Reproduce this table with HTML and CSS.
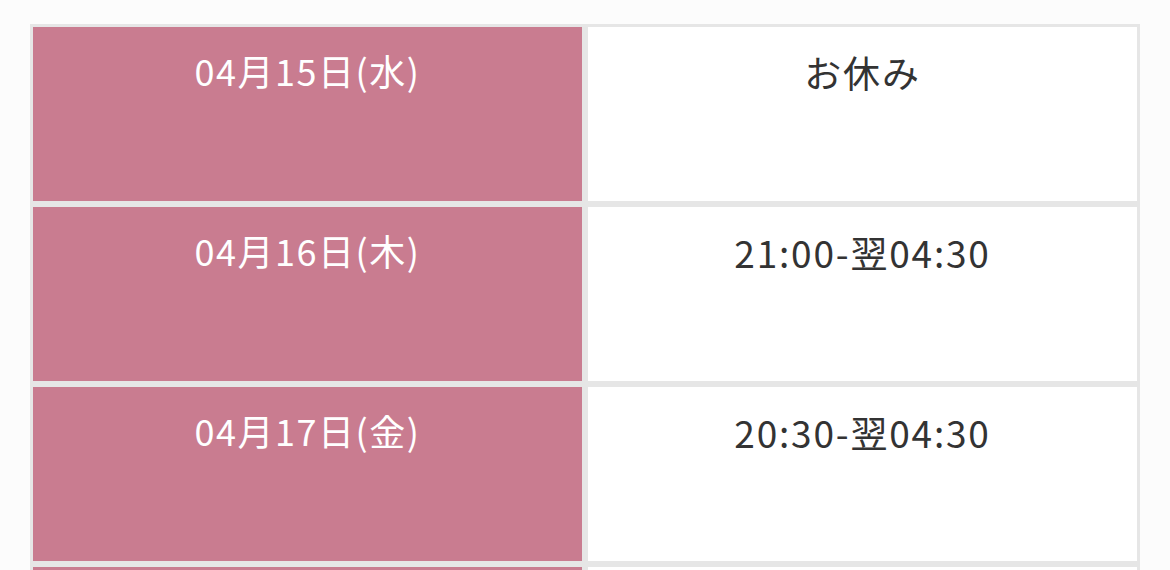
FILE: index.html
```html
<!DOCTYPE html>
<html lang="ja">
<head>
<meta charset="utf-8">
<link rel="stylesheet" href="styles.css">
</head>
<body>
<div class="wrap">
<table class="schedule">
<tbody>
<tr><th>04月15日(水)</th><td>お休み</td></tr>
<tr><th>04月16日(木)</th><td>21:00-翌04:30</td></tr>
<tr><th>04月17日(金)</th><td>20:30-翌04:30</td></tr>
<tr><th>04月18日(土)</th><td>20:30-翌04:30</td></tr>
</tbody>
</table>
</div>
</body>
</html>
```
FILE: styles.css
```css
html, body {
  margin: 0;
  padding: 0;
  background: #fcfcfc;
}
.wrap {
  padding: 24px 30px 0 30px;
}
.schedule {
  width: 1110px;
  border-collapse: separate;
  border-spacing: 0;
  font-family: "Noto Sans CJK JP", "Noto Sans", sans-serif;
  table-layout: fixed;
}
.schedule th,
.schedule td {
  border: 3px solid #e6e6e6;
  box-sizing: content-box;
  padding: 0;
  vertical-align: top;
  text-align: center;
  font-weight: normal;
  font-size: 36px;
  line-height: 48px;
  padding-top: 19px;
  height: 155px;
}
.schedule th {
  background: #c97c90;
  color: #ffffff;
  letter-spacing: 1.5px;
}
.schedule td {
  background: #ffffff;
  color: #333333;
  font-size: 37px;
  letter-spacing: 1.8px;
  padding-top: 21px;
  height: 153px;
}
```
